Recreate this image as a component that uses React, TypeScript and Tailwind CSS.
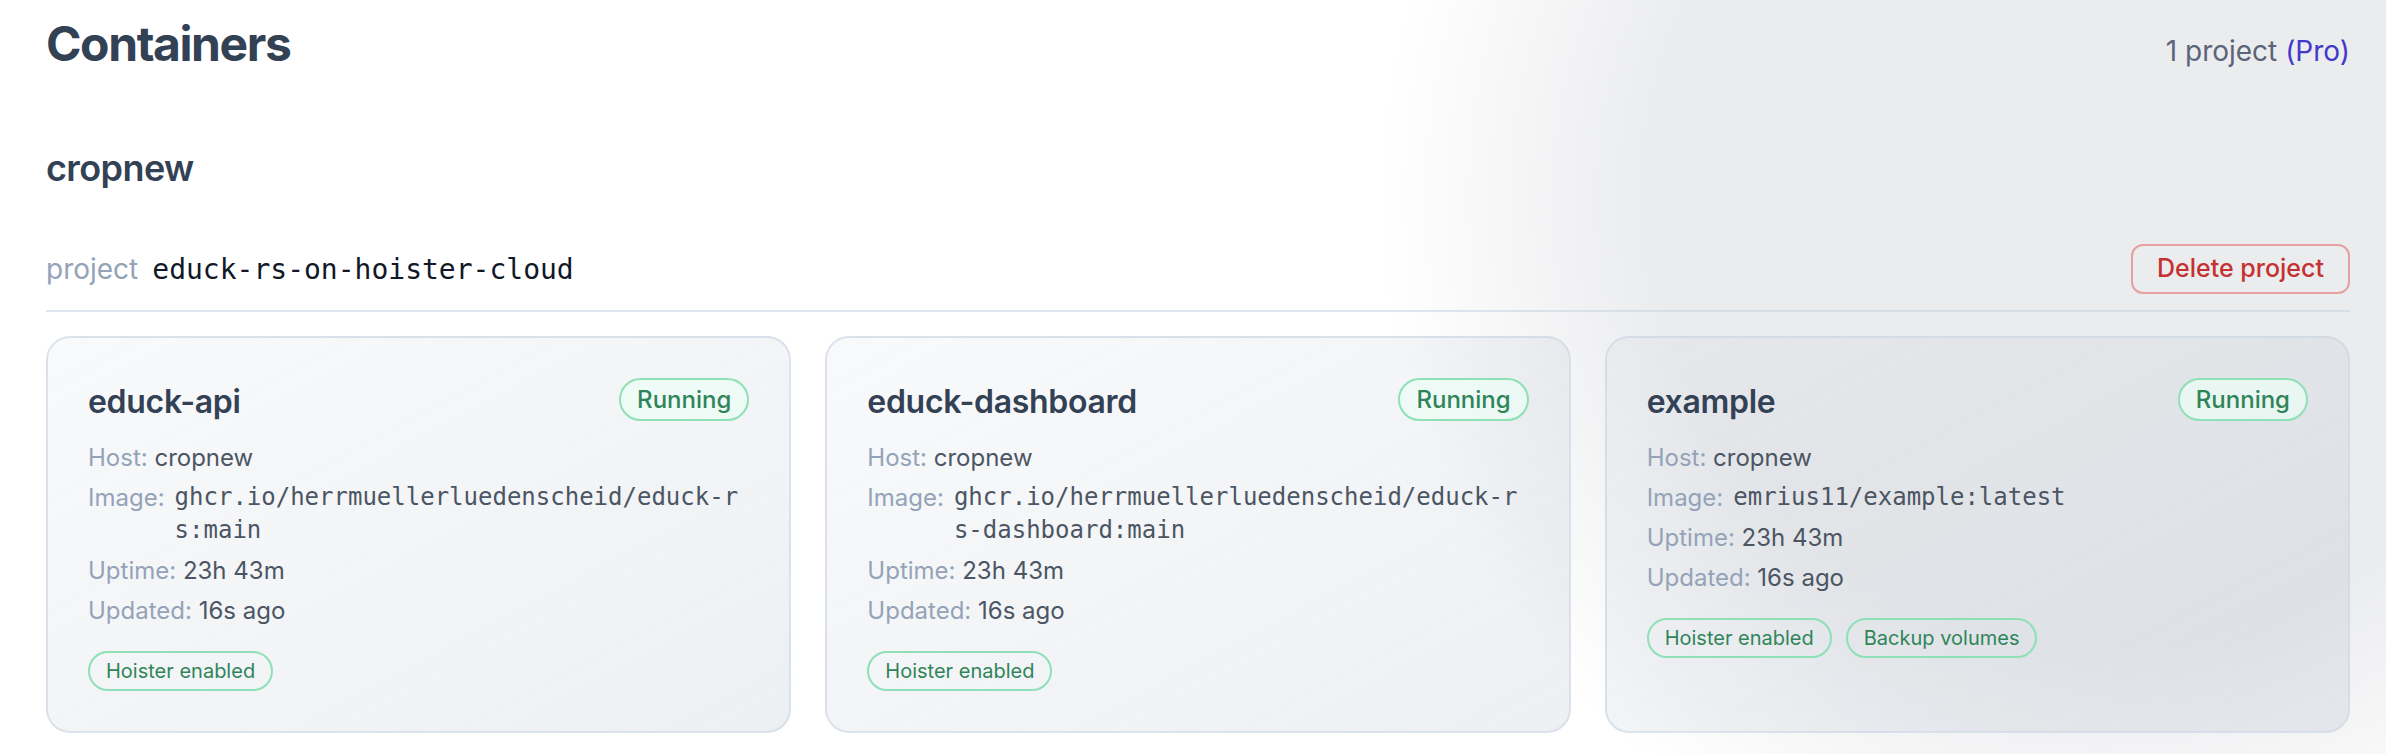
import React from 'react';

interface Container {
  name: string;
  host: string;
  image: string;
  uptime: string;
  updated: string;
  tags: string[];
}

const containers: Container[] = [
  {
    name: 'educk-api',
    host: 'cropnew',
    image: 'ghcr.io/herrmuellerluedenscheid/educk-rs:main',
    uptime: '23h 43m',
    updated: '16s ago',
    tags: ['Hoister enabled'],
  },
  {
    name: 'educk-dashboard',
    host: 'cropnew',
    image: 'ghcr.io/herrmuellerluedenscheid/educk-rs-dashboard:main',
    uptime: '23h 43m',
    updated: '16s ago',
    tags: ['Hoister enabled'],
  },
  {
    name: 'example',
    host: 'cropnew',
    image: 'emrius11/example:latest',
    uptime: '23h 43m',
    updated: '16s ago',
    tags: ['Hoister enabled', 'Backup volumes'],
  },
];

function ContainerCard({ container }: { container: Container }) {
  return (
    <div className="rounded-[24px] border-2 border-[rgba(203,213,225,0.6)] bg-linear-to-br from-[rgba(148,163,184,0.06)] to-[rgba(148,163,184,0.17)] p-[40px]">
      <div className="flex items-start justify-between">
        <h3 className="text-[32px] leading-[48px] font-semibold tracking-[-0.3px] text-[#334155]">{container.name}</h3>
        <span className="flex h-[43px] items-center rounded-full border-2 border-[#8ee0b6] bg-[rgba(236,253,245,0.7)] px-[16px] text-[24px] font-medium text-[#2f855a]">
          Running
        </span>
      </div>
      <div className="mt-[15px] flex flex-col gap-[7px] text-[24px] leading-[33px] text-[#4b5563]">
        <div>
          <span className="text-[#94a3b8]">Host:</span> {container.host}
        </div>
        <div className="flex gap-[10px]">
          <span className="shrink-0 text-[#94a3b8]">Image:</span>
          <span className="min-w-0 break-all font-['DejaVu_Sans_Mono',monospace] text-[24px]">{container.image}</span>
        </div>
        <div>
          <span className="text-[#94a3b8]">Uptime:</span> {container.uptime}
        </div>
        <div>
          <span className="text-[#94a3b8]">Updated:</span> {container.updated}
        </div>
      </div>
      <div className="mt-[24px] flex gap-[14px]">
        {container.tags.map((tag) => (
          <span
            key={tag}
            className="flex h-[40px] items-center rounded-full border-2 border-[#8ee0b6] px-[16px] text-[20px] text-[#2f855a]"
          >
            {tag}
          </span>
        ))}
      </div>
    </div>
  );
}

export default function App() {
  return (
    <div className="min-h-[754px] bg-[radial-gradient(circle_at_2100px_200px,#ebecee_0px,#ebecee_450px,#ffffff_720px)] pt-[12px] pr-[36px] pb-[20px] pl-[46px] font-['Inter',sans-serif]">
      <div className="flex items-baseline justify-between">
        <h1 className="text-[48px] leading-[64px] font-bold tracking-[-1.4px] text-[#334155]">Containers</h1>
        <div className="text-[28px] text-[#5b6478]">
          1 project <span className="text-[#4338ca]">(Pro)</span>
        </div>
      </div>

      <section className="mt-[64px]">
        <h2 className="text-[36px] leading-[56px] font-semibold tracking-[-0.6px] text-[#334155]">cropnew</h2>
        <div className="mt-[48px] flex items-center justify-between border-b-2 border-[rgba(203,213,225,0.6)] pb-[16px]">
          <div className="flex items-baseline gap-[14px] leading-[40px]">
            <span className="text-[28px] text-[#94a3b8]">project</span>
            <span className="font-['DejaVu_Sans_Mono',monospace] text-[28px] text-[#111827]">educk-rs-on-hoister-cloud</span>
          </div>
          <button className="h-[50px] rounded-[12px] border-2 border-[#e5a0a0] px-[24px] text-[25px] font-medium text-[#c53030]">
            Delete project
          </button>
        </div>

        <div className="mt-[24px] grid grid-cols-3 gap-[34px]">
          {containers.map((c) => (
            <ContainerCard key={c.name} container={c} />
          ))}
        </div>
      </section>
    </div>
  );
}
